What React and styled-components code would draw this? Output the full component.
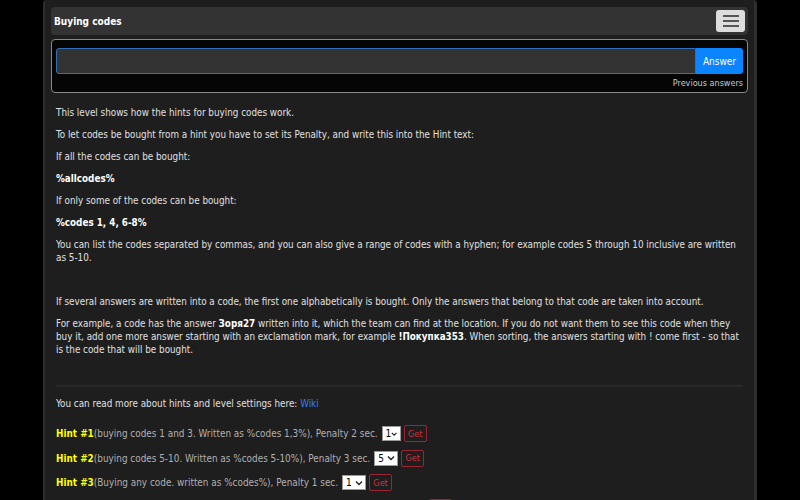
import React from 'react'
import styled, { createGlobalStyle } from 'styled-components'

const GlobalStyle = createGlobalStyle`
  html, body {
    margin: 0;
    padding: 0;
    background: #000;
    overflow: hidden;
  }
  body {
    font-family: "DejaVu Sans", Verdana, sans-serif;
    font-stretch: condensed;
  }
`

const hints = [
  { n: 1, text: '(buying codes 1 and 3. Written as %codes 1,3%), Penalty 2 sec.', value: '1', wide: false },
  { n: 2, text: '(buying codes 5-10. Written as %codes 5-10%), Penalty 3 sec.', value: '5', wide: true },
  { n: 3, text: '(Buying any code. written as %codes%), Penalty 1 sec.', value: '1', wide: true },
  { n: 4, text: '(buying codes 2, 4, 6-8. Written as %codes 2,4,6-8%), Penalty 5 sec.', value: '1', wide: true },
]

export default function App() {
  return (
    <>
      <GlobalStyle />
      <Page>
        <Header>
          <Title>Buying codes</Title>
          <MenuButton aria-label="menu">
            <span />
            <span />
            <span />
          </MenuButton>
        </Header>

        <AnswerBox>
          <AnswerRow>
            <AnswerInput />
            <AnswerButton>Answer</AnswerButton>
          </AnswerRow>
          <PrevLink>Previous answers</PrevLink>
        </AnswerBox>

        <Content>
          <p>This level shows how the hints for buying codes work.</p>
          <p>To let codes be bought from a hint you have to set its Penalty, and write this into the Hint text:</p>
          <p>If all the codes can be bought:</p>
          <p><b>%allcodes%</b></p>
          <p>If only some of the codes can be bought:</p>
          <p><b>%codes 1, 4, 6-8%</b></p>
          <p>You can list the codes separated by commas, and you can also give a range of codes with a hyphen; for example codes 5 through 10 inclusive are written as 5-10.</p>
          <Spacer />
          <p>If several answers are written into a code, the first one alphabetically is bought. Only the answers that belong to that code are taken into account.</p>
          <p>For example, a code has the answer <b>Зоря27</b> written into it, which the team can find at the location. If you do not want them to see this code when they buy it, add one more answer starting with an exclamation mark, for example <b>!Покупка353</b>. When sorting, the answers starting with ! come first - so that is the code that will be bought.</p>
          <Divider />
          <p>You can read more about hints and level settings here: <WikiLink href="#">Wiki</WikiLink></p>

          <Hints>
            {hints.map(h => (
              <HintRow key={h.n}>
                <HintName>Hint #{h.n}</HintName>
                <HintText>{h.text}</HintText>
                <Select $wide={h.wide}>
                  <span>{h.value}</span>
                  <svg width="8" height="6" viewBox="0 0 8 6">
                    <path d="M1 1.5 L4 4.5 L7 1.5" fill="none" stroke="#222" strokeWidth="1.4" />
                  </svg>
                </Select>
                <GetButton>Get</GetButton>
              </HintRow>
            ))}
          </Hints>
        </Content>
      </Page>
    </>
  )
}

const Page = styled.div`
  width: 714px;
  margin: 0 auto;
  min-height: 600px;
  box-sizing: border-box;
  background: #1e1e1e;
  border-left: 2px solid #2e2e2e;
  border-right: 3px solid #2e2e2e;
  border-radius: 4px 4px 0 0;
  padding: 7px 6px 0 6px;
`

const Header = styled.div`
  height: 28px;
  display: flex;
  align-items: center;
  justify-content: space-between;
  background: #333;
  border-radius: 4px;
  padding: 0 3px;
`

const Title = styled.div`
  color: #fff;
  font-weight: 700;
  font-size: 10px;
`

const MenuButton = styled.button`
  width: 29px;
  height: 22px;
  background: #ddd;
  border: none;
  border-radius: 3px;
  padding: 0;
  display: flex;
  flex-direction: column;
  align-items: center;
  justify-content: center;
  gap: 3px;

  span {
    display: block;
    width: 16px;
    height: 2px;
    background: #555;
  }
`

const AnswerBox = styled.div`
  margin-top: 4px;
  background: #050505;
  border: 1px solid #888;
  border-radius: 4px;
  padding: 8px 4px 2px 4px;
`

const AnswerRow = styled.div`
  display: flex;
  height: 26px;
`

const AnswerInput = styled.input`
  flex: 1;
  min-width: 0;
  box-sizing: border-box;
  height: 26px;
  background: #333;
  border: 1px solid #3470b8;
  border-radius: 3px 0 0 3px;
  outline: none;
  color: #fff;
`

const AnswerButton = styled.button`
  width: 47px;
  height: 26px;
  border: none;
  border-radius: 0 3px 3px 0;
  background: #0a84ff;
  color: #fff;
  font-family: inherit;
  font-stretch: condensed;
  font-size: 10px;
  padding: 0;
`

const PrevLink = styled.div`
  text-align: right;
  color: #c8c8c8;
  font-size: 9px;
  line-height: 14px;
  padding-top: 2px;
`

const Content = styled.div`
  padding: 4px 5px 0 5px;
  color: #e0e0e0;
  font-size: 9.8px;
  line-height: 13px;

  p {
    margin: 9px 0;
  }

  b {
    color: #fff;
    font-weight: 700;
  }
`

const Spacer = styled.div`
  height: 13px;
`

const Divider = styled.hr`
  border: none;
  border-top: 2px solid #292929;
  margin: 29px 0 10px 0;
`

const WikiLink = styled.a`
  color: #2f7fff;
  text-decoration: none;
`

const Hints = styled.div`
  margin-top: 15px;
  display: flex;
  flex-direction: column;
  gap: 7.5px;
`

const HintRow = styled.div`
  display: flex;
  align-items: center;
  height: 17px;
  white-space: nowrap;
  font-size: 9.9px;
`

const HintName = styled.span`
  color: #ffff00;
  font-weight: 700;
`

const HintText = styled.span`
  color: #b0b0b0;
  margin-right: 4px;
`

const Select = styled.div`
  width: ${p => (p.$wide ? '24px' : '19px')};
  height: 15px;
  box-sizing: border-box;
  background: #fff;
  border: 1px solid #999;
  display: flex;
  align-items: center;
  justify-content: space-between;
  padding: 0 2px 0 3px;
  color: #000;
  font-size: 10px;
  margin-right: 3px;
`

const GetButton = styled.button`
  height: 17px;
  width: 23px;
  padding: 0;
  background: transparent;
  border: 1px solid #992533;
  border-radius: 2px;
  color: #d0323f;
  font-family: inherit;
  font-stretch: condensed;
  font-size: 9px;
`
